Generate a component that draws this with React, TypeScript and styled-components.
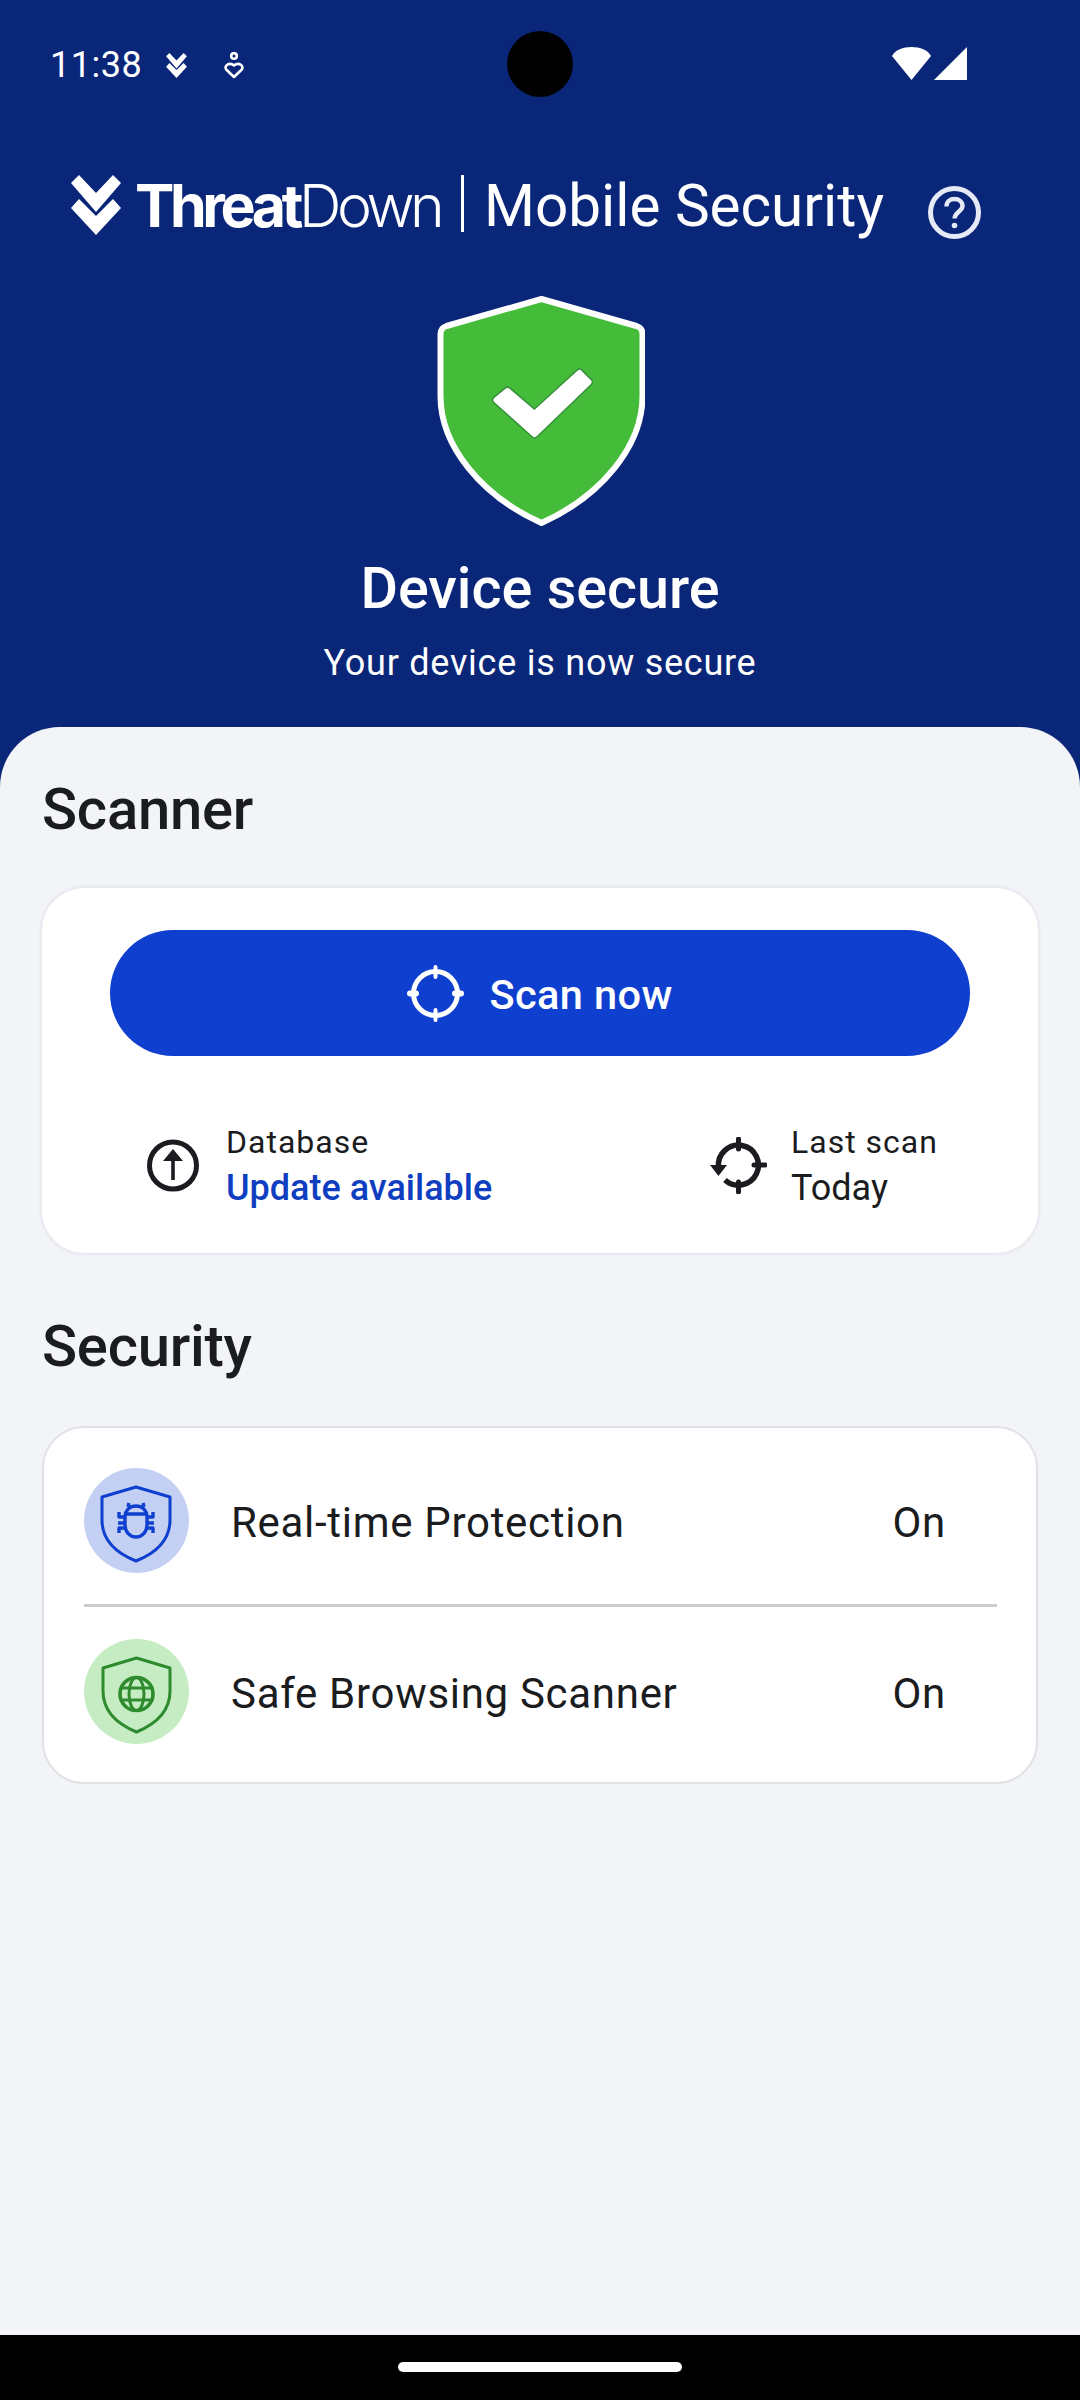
import styled, { createGlobalStyle } from "styled-components";

const GlobalStyle = createGlobalStyle`
  html, body {
    margin: 0;
    padding: 0;
    background: #0a2679;
  }
  * {
    box-sizing: border-box;
  }
`;

const Page = styled.div`
  width: 1080px;
  height: 2400px;
  display: flex;
  flex-direction: column;
  background: #0a2679;
  font-family: Roboto, "Liberation Sans", sans-serif;
  overflow: hidden;
`;
const Hero = styled.div`
  height: 727px;
  position: relative;
  display: flex;
  flex-direction: column;
  align-items: center;
  color: #fff;
`;
const StatusBar = styled.div`
  width: 100%;
  height: 130px;
  padding: 47px 113px 0 50px;
  display: flex;
  justify-content: space-between;
  align-items: flex-start;
`;
const StatusGroup = styled.div`
  display: flex;
  align-items: center;
`;
const Time = styled.span`
  font-size: 36px;
  line-height: 36px;
  letter-spacing: 0.5px;
  margin-right: 23px;
`;
const Camera = styled.div`
  position: absolute;
  top: 31px;
  left: 507px;
  width: 66px;
  height: 66px;
  border-radius: 50%;
  background: #000;
`;
const Brand = styled.div`
  width: 100%;
  height: 166px;
  padding: 45px 0 0 71px;
  display: flex;
  align-items: flex-start;
`;
const BrandName = styled.span`
  width: 307px;
  margin: 1px 0 0 14px;
  font-family: Inter, sans-serif;
  font-size: 59px;
  line-height: 60px;
  letter-spacing: -4.4px;
  font-weight: 300;
  white-space: nowrap;

  b {
    font-weight: 700;
  }
`;
const BrandRule = styled.div`
  width: 3px;
  height: 57px;
  margin-left: 19px;
  background: #fff;
`;
const Product = styled.span`
  margin: 1px 0 0 20px;
  font-size: 58.4px;
  line-height: 60px;
  white-space: nowrap;
`;
const Help = styled.div`
  margin: 11px 0 0 44px;
  display: flex;
`;
const Title = styled.h1`
  margin: 28px 0 0;
  font-size: 57.5px;
  line-height: 70px;
  font-weight: 500;
`;
const Subtitle = styled.div`
  margin-top: 17px;
  font-size: 36px;
  line-height: 44px;
  letter-spacing: 0.75px;
`;
const Sheet = styled.div`
  flex: 1;
  padding: 50px 42px 0;
  background: #f3f4f8;
  border-radius: 60px 60px 0 0;
`;
const SectionTitle = styled.h2<{ $gap?: number }>`
  margin: ${(p) => p.$gap ?? 0}px 0 0;
  font-size: 58px;
  line-height: 64px;
  font-weight: 500;
  letter-spacing: -0.25px;
  color: #1a1c20;
`;
const ScanCard = styled.div`
  height: 365px;
  margin-top: 47px;
  padding: 42px 68px 0;
  background: #fff;
  border-radius: 42px;
  box-shadow: 0 0 4px rgba(30, 40, 70, 0.14);
`;
const ScanButton = styled.div`
  height: 126px;
  display: flex;
  align-items: center;
  justify-content: center;
  gap: 25px;
  background: #0f3fcf;
  border-radius: 63px;
  color: #fff;
`;
const ScanLabel = styled.span`
  padding-top: 3px;
  font-size: 41.5px;
  font-weight: 500;
  letter-spacing: 0.4px;
`;
const InfoRow = styled.div`
  margin-top: 63px;
  padding-left: 37px;
  display: grid;
  grid-template-columns: 563px 1fr;
`;
const InfoItem = styled.div<{ $gap: number }>`
  display: flex;
  align-items: center;
  gap: ${(p) => p.$gap}px;
`;
const InfoLabel = styled.div`
  font-size: 32px;
  line-height: 46px;
  letter-spacing: 1px;
  color: #1a1c20;
  white-space: nowrap;
`;
const InfoValue = styled.div<{ $accent?: boolean }>`
  font-size: 36px;
  line-height: 46px;
  font-weight: ${(p) => (p.$accent ? 500 : 400)};
  color: ${(p) => (p.$accent ? "#0f3fc0" : "#1a1c20")};
  white-space: nowrap;
`;
const ListCard = styled.div`
  height: 358px;
  margin-top: 48px;
  padding: 0 39px 0 40px;
  background: #fff;
  border: 2px solid #e0e2e6;
  border-radius: 42px;
`;
const ListRow = styled.div`
  height: 176px;
  padding: 9px 51px 0 0;
  display: flex;
  align-items: center;
  font-size: 42px;
  letter-spacing: 0.7px;
  color: #1a1c20;

  span {
    padding-top: 3px;
  }

  & + & {
    height: 178px;
    padding: 0 51px 6px 0;
    border-top: 3px solid #cccccc;
  }
`;
const RowLabel = styled.span`
  flex: 1;
  margin-left: 42px;
`;

const LogoMark = () => (
  <svg width="50" height="60" viewBox="0 0 50 60" fill="#fff">
    <path d="M0 8 8 0 25 18 42 0 50 8 25 37Z" />
    <path d="M0 33 8 24 25 41 42 24 50 33 25 60Z" />
  </svg>
);

const MalwareIcon = () => (
  <svg width="23" height="25" viewBox="0 0 50 60" fill="#fff">
    <path d="M0 8 8 0 25 18 42 0 50 8 25 37Z" />
    <path d="M0 33 8 24 25 41 42 24 50 33 25 60Z" />
  </svg>
);

const PersonHeart = () => (
  <svg width="20" height="27" viewBox="0 0 20 27" fill="none" stroke="#fff" strokeWidth="2.6" style={{ marginLeft: 36 }}>
    <circle cx="10" cy="4" r="2.8" />
    <path d="M10 25 2.2 17.5C-.2 14 4.8 9.6 10 13.4 15.2 9.6 20.2 14 17.8 17.5Z" strokeLinejoin="round" />
  </svg>
);

const SignalIcons = () => (
  <svg width="75" height="33" viewBox="0 0 75 33" fill="#fff">
    <path d="M0 9C3 3 11 0 19.5 0S36 3 39 9L19.5 33Z" />
    <path d="M75 0V33H42Z" />
  </svg>
);

const HelpIcon = () => (
  <svg width="53" height="53" viewBox="0 0 53 53" fill="none" stroke="#e6eaf6">
    <circle cx="26.5" cy="26.5" r="24" strokeWidth="5" />
    <path d="M18.5 20.5C18.5 15.5 22 13 26.5 13S34.5 15.8 34.5 20C34.5 25.5 26.5 26 26.5 32.5" strokeWidth="4.4" />
    <circle cx="26.5" cy="39.5" r="2.8" fill="#e6eaf6" stroke="none" />
  </svg>
);

const StatusShield = () => (
  <svg width="210" height="230" viewBox="-1.5 0 210 230">
    <path
      d="M105 3 200 30Q206 32 206 38V100C206 150 165 200 105 227 45 200 4 150 4 100V38Q4 32 10 30Z"
      fill="#45bb3a"
      stroke="#fff"
      strokeWidth="6"
      strokeLinejoin="round"
    />
    <path
      d="M71 95 98 118 143 77 152 86 98 138 60 104Z"
      fill="#fff"
      stroke="#36903a"
      strokeWidth="9"
      strokeLinejoin="round"
    />
    <path d="M71 95 98 118 143 77 152 86 98 138 60 104Z" fill="#fff" stroke="#fff" strokeWidth="6" strokeLinejoin="round" />
  </svg>
);

const TargetIcon = () => (
  <svg width="57" height="57" viewBox="0 0 57 57" fill="none" stroke="#fff" strokeWidth="5" strokeLinecap="round">
    <circle cx="28.5" cy="28.5" r="22" />
    <path d="M28.5 2V12M28.5 45V55" strokeWidth="4" />
    <path d="M3 28.5H9M48 28.5H54" strokeWidth="6" />
  </svg>
);

const UpdateIcon = () => (
  <svg width="52" height="53" viewBox="0 0 52 53" fill="none" stroke="#1a1c20">
    <circle cx="26" cy="26.5" r="23.5" strokeWidth="5" />
    <path d="M26 41V16" strokeWidth="3.6" />
    <path d="M26 10 36 22H16Z" fill="#1a1c20" stroke="none" />
  </svg>
);

const LastScanIcon = () => (
  <svg width="57" height="57" viewBox="0 0 57 57" fill="none" stroke="#1a1c20" strokeWidth="5.5" strokeLinecap="round">
    <path d="M8.5 30A20 20 0 1 1 15 43" strokeLinecap="butt" />
    <path d="M28.5 2V12M28.5 45V55M44 28H55" strokeWidth="5" />
    <path d="M0 28H17L8.5 39Z" fill="#1a1c20" stroke="none" />
  </svg>
);

const IconDisc = styled.div<{ $tone: string }>`
  width: 105px;
  height: 105px;
  flex: none;
  border-radius: 50%;
  background: ${(p) => p.$tone};
  display: flex;
`;

const BugShield = () => (
  <svg width="105" height="105" viewBox="0 0 105 105" fill="none" stroke="#0f3fcf" strokeWidth="3" strokeLinejoin="round">
    <path d="M52 19 86 29V52C86 72 72 85 52 93 32 85 18 72 18 52V29Z" />
    <path d="M41 49C41 42 46 38 52 38S63 42 63 49V57C63 64 58 69 52 69S41 64 41 57Z" strokeWidth="3.4" />
    <path d="M42 46H62M44 39 45 35M60 39 59 35" strokeWidth="3.4" />
    <path d="M41 49H35V44M63 49H69V44M41 55H34M63 55H70M41 60H35V65M63 60H69V65" strokeWidth="3.4" />
  </svg>
);

const GlobeShield = () => (
  <svg width="105" height="105" viewBox="0 0 105 105" fill="none" stroke="#2e8b2e" strokeWidth="3" strokeLinejoin="round">
    <path d="M52.5 19 86 29V52C86 72 72 85 52.5 93 33 85 19 72 19 52V29Z" />
    <circle cx="52.5" cy="55" r="16.5" strokeWidth="3.6" />
    <ellipse cx="52.5" cy="55" rx="7.5" ry="16.5" strokeWidth="3" />
    <path d="M38 49H67M38 61H67" strokeWidth="3" />
  </svg>
);

const NavBar = styled.div`
  height: 65px;
  background: #000;
  display: flex;
  justify-content: center;
  padding-top: 27px;
`;
const HomePill = styled.div`
  width: 284px;
  height: 10px;
  border-radius: 5px;
  background: #fff;
`;

const App = () => {
  return (
    <Page>
      <GlobalStyle />
      <Hero>
        <Camera />
        <StatusBar>
          <StatusGroup>
            <Time>11:38</Time>
            <MalwareIcon />
            <PersonHeart />
          </StatusGroup>
          <SignalIcons />
        </StatusBar>
        <Brand>
          <LogoMark />
          <BrandName>
            <b>Threat</b>Down
          </BrandName>
          <BrandRule />
          <Product>Mobile Security</Product>
          <Help>
            <HelpIcon />
          </Help>
        </Brand>
        <StatusShield />
        <Title>Device secure</Title>
        <Subtitle>Your device is now secure</Subtitle>
      </Hero>
      <Sheet>
        <SectionTitle>Scanner</SectionTitle>
        <ScanCard>
          <ScanButton>
            <TargetIcon />
            <ScanLabel>Scan now</ScanLabel>
          </ScanButton>
          <InfoRow>
            <InfoItem $gap={27}>
              <UpdateIcon />
              <div>
                <InfoLabel>Database</InfoLabel>
                <InfoValue $accent>Update available</InfoValue>
              </div>
            </InfoItem>
            <InfoItem $gap={24}>
              <LastScanIcon />
              <div>
                <InfoLabel>Last scan</InfoLabel>
                <InfoValue>Today</InfoValue>
              </div>
            </InfoItem>
          </InfoRow>
        </ScanCard>
        <SectionTitle $gap={61}>Security</SectionTitle>
        <ListCard>
          <ListRow>
            <IconDisc $tone="#c3d0f3">
              <BugShield />
            </IconDisc>
            <RowLabel>Real-time Protection</RowLabel>
            <span>On</span>
          </ListRow>
          <ListRow>
            <IconDisc $tone="#c6ecc3">
              <GlobeShield />
            </IconDisc>
            <RowLabel>Safe Browsing Scanner</RowLabel>
            <span>On</span>
          </ListRow>
        </ListCard>
      </Sheet>
      <NavBar>
        <HomePill />
      </NavBar>
    </Page>
  );
};

export default App;
